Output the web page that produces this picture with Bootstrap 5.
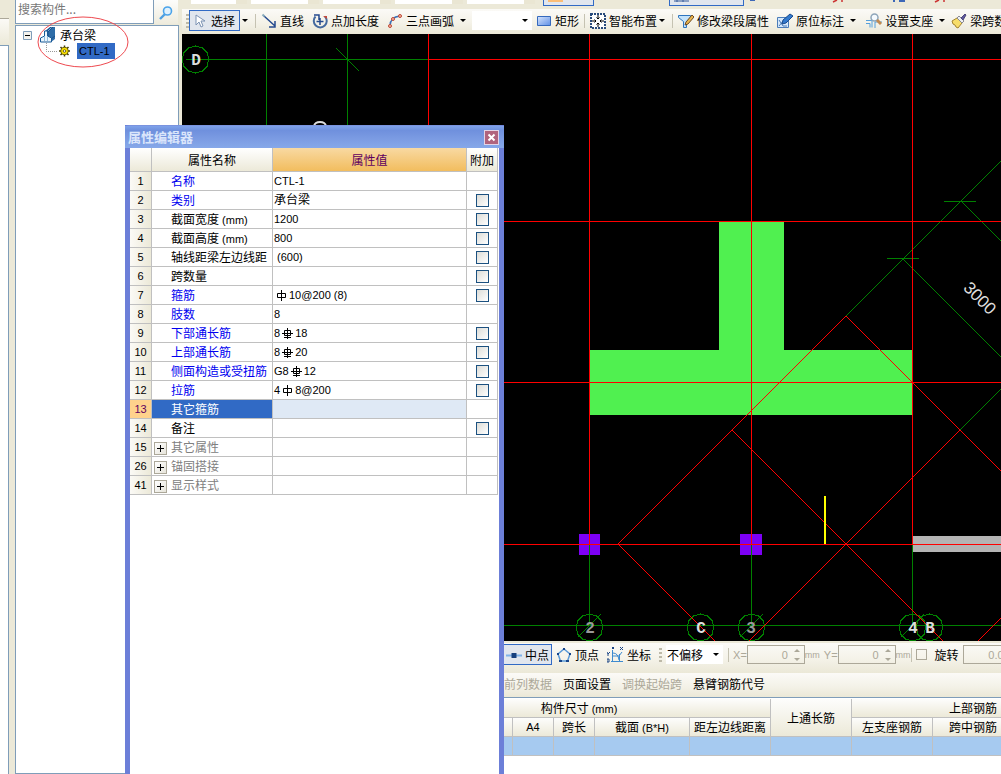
<!DOCTYPE html>
<html lang="zh-CN">
<head>
<meta charset="utf-8">
<meta name="viewport" content="width=device-width, initial-scale=1">
<title>属性编辑器</title>
<link href="https://cdn.jsdelivr.net/npm/bootstrap@5.3.0/dist/css/bootstrap.min.css" rel="stylesheet">
<style>
body{font:12px/16px "Noto Sans CJK SC",sans-serif;color:#000;background:#ece9d8;height:100vh;white-space:nowrap}
button,input,select{font:inherit;color:inherit;border:0;border-radius:0;padding:0;background:none}
.lt{font-family:"Liberation Sans",sans-serif;font-size:11px}
.unit{font-family:"Liberation Sans",sans-serif;font-size:9px}
/* left docks */
.side-strip{width:11px;background:#ece9d8}
.side-tab{height:27px;margin-top:18px;background:linear-gradient(#fbfaf6,#ece9d8);border-top:1px solid #aca899;width:9px}
.side-page{width:9px;background:#fff;border:solid #7f9db9;border-width:1px 1px 0 0}
.tree-dock{width:164px;margin:0 3px 0 4px}
.find-row{height:24px}
.find-row input{width:139px;background:#fff;border:1px solid #7f9db9;border-top:0;font-size:12px;padding:0 2px 5px}
.find-row input::placeholder{color:#777;opacity:1}
.find-row button{width:24px;background:linear-gradient(#fdfdfb,#eeebdd)}
.tree{background:#fff;border:1px solid #7f9db9;padding:1px 0 0 7px;margin-top:1px}
.tree ul{list-style:none;margin:0;padding:0}
.picked{background:#316ac5;padding:0 5px 0 2px;height:16px;margin-left:7px}
.ring{position:absolute;left:20px;top:-11px;pointer-events:none}
/* toolbars */
.bar{background:linear-gradient(#fbfaf7,#f4f2e8 55%,#ebe8d7)}
.upper-bar{height:9px;padding-left:9px;gap:4px;background:#ece9d8}
.cut-combo{width:68px;height:4px;background:#fff;border-right:11px solid #eae6d3}
.cut-btn{height:6px;border:1px solid #316ac5;border-top:0;background:#e1e6ee}
.draw-bar{height:25px;padding:0 0 2px 4px}
.tool{display:flex;align-items:center;gap:3px;height:21px;flex:none}
.tool svg{flex:none}
.tool.active{border:1px solid #316ac5;background:#e1e6ee}
.grip{width:3px;height:14px;flex:none;background:repeating-linear-gradient(#bdb9a8 0 2px,transparent 2px 4px)}
.split{width:10px;height:20px;flex:none;display:flex;align-items:center;justify-content:center}
.split::before,.combo::after{content:"";border:solid transparent;border-width:3px 3px 0;border-top-color:#000}
.rule{width:1px;height:14px;background:#c5c2b2;flex:none;margin:0 5px}
.combo{display:flex;align-items:center;background:#fff;height:19px;padding-right:4px;flex:none}
.combo select{appearance:none;width:47px;height:19px;outline:0;padding-left:1px}
.cad{background:#000;min-height:0}
.cad svg{position:absolute;inset:0}
/* snap bar */
.snap-bar{height:32px;padding:1px 0 8px 321px;border-top:2px solid #ece9d8}
.snap-bar .active{padding:0 2px}
.off{color:#aca899}
.num{display:flex;align-items:center;width:58px;height:19px;border:1px solid #aca899;flex:none}
.num input{width:40px;text-align:right;color:#aca899}
.spin{display:flex;flex-direction:column;gap:6px;margin-left:6px}
.spin i{border:3px solid transparent}
.spin i:first-child{border-top:0;border-bottom-color:#aca899}
.spin i:last-child{border-bottom:0;border-top-color:#aca899}
.snap-bar input[type=checkbox]{appearance:none;width:11px;height:11px;border:1px solid #aca899;flex:none}
.span-bar{height:25px;padding:0 0 2px 322px;gap:11px;border-bottom:1px solid #7f9db9}
.span-area{height:76px;background:#fff;padding-top:1px}
.span-table{table-layout:fixed;width:913px;border-collapse:separate;border-spacing:0}
.span-table th{font-weight:400;text-align:center;height:19px;padding:0;line-height:16px;border:solid #c0c0c0;border-width:0 1px 1px 0;background:linear-gradient(#fdfdfc,#ece9d8)}
.span-table td{height:19px;padding:0;background:#a6caf0;border:solid #c0c0c0;border-width:0 1px 1px 0}
/* property window */
.prop-win{position:absolute;left:125px;top:125px;bottom:0;width:379px;background:#fff;border:solid #6878d4;border-width:1px 5px 0;border-color:#7a93df #6c7fd8 #6c7fd8}
.prop-title{height:22px;margin:0 -5px;padding:0 6px 0 3px;background:linear-gradient(#7ea2ea,#6f90dd 20%,#7c9ce3 60%,#86a8e9);color:#dbe6fb;font-weight:700;font-size:13px}
.prop-title button{width:13px;height:13px;background:#b0637d;outline:1px solid #e3d4e6;display:flex}
.prop-table{table-layout:fixed;width:368px;border-collapse:separate;border-spacing:0;line-height:16px}
.prop-table th,.prop-table td{padding:0 0 0 1px;height:19px;font-weight:400;border:solid #c0c0c0;border-width:0 1px 1px 0;overflow:hidden}
.prop-table thead th{height:24px;text-align:center;background:linear-gradient(#fff,#ece9d8);padding:0}
.prop-table thead .hot{background:linear-gradient(#f8d9a2,#f2bd5e);color:#600060}
.prop-table tbody th{background:linear-gradient(90deg,#fbfaf6,#ece9d8);text-align:center;padding:0}
.prop-table td:nth-child(2){padding-left:19px}
.prop-table td:nth-child(4){padding:0;text-align:center}
.prop-table td:nth-child(3){font:11px/16px "Liberation Sans","Noto Sans CJK SC",sans-serif}
.prop-table td.cjk{font-size:12px}
.prop-table td.inset{padding-left:4px}
.prop-table .key{color:#0000f0}
.prop-table .fold{color:#808080;padding-left:2px!important}
.steel{margin:0 2px;vertical-align:-2px}
.fold button{width:13px;height:13px;border:1px solid #aca899;background:linear-gradient(135deg,#fff,#e6e4da);margin-right:4px;display:inline-flex;vertical-align:-2px}
.now th{background:#ffd28c!important;color:#600060}
.now td:nth-child(2){background:#316ac5;color:#fff}
.now td:nth-child(3){background:#dfe9f5}
.prop-table input{appearance:none;width:13px;height:13px;border:1px solid #1c5180;background:linear-gradient(135deg,#dcdcd7,#fff);display:block;margin:0 auto}
</style>
</head>
<body class="d-flex overflow-hidden position-relative">
<svg width="0" height="0" class="position-absolute" aria-hidden="true">
  <symbol id="barPlain" viewBox="0 0 11 11"><path d="M5.500 0v11M1.500 3.500h8v4h-8z" fill="none" stroke="#000"/></symbol>
  <symbol id="barRibbed" viewBox="0 0 11 11"><path d="M5.500 0v11M2.500 2.500h6v5h-6zM0 5.500h11M2 9.500h7" fill="none" stroke="#000"/></symbol>
</svg>
<aside class="side-strip d-flex flex-column flex-shrink-0"><div class="side-tab flex-shrink-0"></div><div class="side-page flex-grow-1"></div></aside>

<aside class="tree-dock d-flex flex-column flex-shrink-0">
  <div class="find-row d-flex">
    <input type="text" placeholder="搜索构件..." aria-label="搜索构件">
    <button type="button" aria-label="搜索"><svg width="14" height="14" viewBox="0 0 14 14"><path d="M1 13l5-5" stroke="#4e9fe0" stroke-width="2.4"/><circle cx="8.500" cy="5" r="4" fill="#dff1fd" stroke="#4aa3ea" stroke-width="1.600"/></svg></button>
  </div>
  <div class="tree flex-grow-1 position-relative">
    <svg class="ring" width="94" height="54"><ellipse cx="47" cy="27" rx="45" ry="25" fill="none" stroke="#ee4a50"/></svg>
    <ul>
      <li>
        <div class="d-flex align-items-center">
          <svg width="9" height="9" class="flex-shrink-0"><path d="M.5.5h8v8h-8z" fill="#f4f3ee" stroke="#7f9db9"/><path d="M2 4.500h5" stroke="#000"/></svg>
          <svg width="16" height="16" viewBox="0 0 16 16" class="ms-2"><path d="M5 4l5-4h5v12l-4 3-2-3z" fill="#2e6da8"/><path d="M7 4l4-4h2L8 5v6M11 12l4-3" fill="#75a9d4" stroke="#1c4f88"/><path d="M.5 15v-4l4-2V4h3v5l4 2v4z" fill="#eaf4fc" stroke="#1a5a96"/><path d="M4.500 9v5M7.500 9v5" stroke="#8db8dc"/></svg>
          <span class="ms-1">承台梁</span>
        </div>
        <ul>
          <li class="d-flex align-items-center">
            <svg width="47" height="16"><path d="M23.500 0v8.500H34" fill="none" stroke="#999" stroke-dasharray="1 1"/><g transform="translate(41.500 8)"><path d="M0-5.500v11M-5.500 0h11M-4-4l8 8M4-4l-8 8" stroke="#443c00" stroke-width="1.500"/><circle r="3.800" fill="#ffe500" stroke="#4c4400" stroke-width=".8"/><circle r="1.300" fill="#fff" stroke="#4c4400" stroke-width=".8"/></g></svg>
            <span class="picked lt">CTL-1</span>
          </li>
        </ul>
      </li>
    </ul>
  </div>
</aside>

<main class="d-flex flex-column flex-grow-1 overflow-hidden">
  <div class="upper-bar d-flex overflow-hidden flex-shrink-0">
    <i class="cut-combo flex-shrink-0" style="width:56px"></i><i class="cut-combo flex-shrink-0"></i><i class="cut-combo flex-shrink-0"></i><i class="cut-combo flex-shrink-0"></i><i class="cut-combo flex-shrink-0"></i>
    <i class="cut-btn flex-shrink-0 ms-1" style="width:51px"><svg class="d-block ms-1" width="15" height="2"><path d="M0 0h15v2H0z" fill="#fbbd76"/></svg></i>
    <i class="cut-btn flex-shrink-0" style="width:75px;margin-left:71px"><svg class="d-block ms-1" width="15" height="2"><path d="M0 1h15M3 0v2M9 0v2" stroke="#345a9a"/></svg></i>
    <svg width="230" height="4" class="flex-shrink-0"><path d="M2 0h5M146 0v2M151 1h6" stroke="#3d68b8" stroke-width="2"/><path d="M85 2l4-2M94 0v2M187 2l4-2M196 0v2" stroke="#c33" stroke-width="1.500"/></svg>
  </div>
  <div class="bar draw-bar d-flex align-items-center flex-shrink-0">
    <span class="grip"></span>
    <button class="tool active ps-1 pe-1" type="button"><svg width="14" height="16" viewBox="0 0 14 16"><path d="M2 2v10l3-3 2 5 2-1-2-5h4z" fill="#fff" stroke="#7d93b4"/></svg>选择</button>
    <button class="split" type="button" aria-label="更多选择"></button><span class="rule"></span>
    <button class="tool" type="button"><svg width="16" height="16"><path d="M3 3l11 10M14 8v6H8" fill="none" stroke="#244a8e" stroke-width="1.500"/><path d="M1.500 1.500l2 2" stroke="#8ab" stroke-width="2"/></svg>直线</button>
    <button class="tool ms-2" type="button"><svg width="16" height="16"><path d="M3.500 3.500a6.500 6.500 0 1 0 9.500 0" fill="none" stroke="#456a9f" stroke-width="2"/><path d="M2 2h5v5M8 5v7M4.500 8.500h7" fill="none" stroke="#244a8e" stroke-width="1.500"/><path d="M11 3h4v3z" fill="#c24a3d"/></svg>点加长度</button>
    <button class="tool ms-2" type="button"><svg width="16" height="16"><path d="M3 13Q3 4 13 3" fill="none" stroke="#3c72b8" stroke-width="1.500"/><g fill="#f5b6a6" stroke="#bf4a35"><circle cx="3" cy="13" r="1.500"/><circle cx="6" cy="6" r="1.500"/><circle cx="13" cy="3" r="1.500"/></g></svg>三点画弧</button>
    <button class="split ms-1 me-1" type="button" aria-label="更多画弧"></button>
    <label class="combo"><select aria-label="画法" class="w-auto"><option>　　　　</option></select></label>
    <button class="tool ms-1" type="button"><svg width="16" height="16"><defs><linearGradient id="rectFill" x2="1" y2="1"><stop stop-color="#d7e5fc"/><stop offset="1" stop-color="#5f8fe6"/></linearGradient></defs><path d="M1.500 3.500h13v9h-13z" fill="url(#rectFill)" stroke="#3569bd"/></svg>矩形</button>
    <span class="rule"></span>
    <button class="tool" type="button"><svg width="16" height="16"><path d="M1 1h14v14H1z" fill="#fff" stroke="#294b7c" stroke-width="2" stroke-dasharray="2 1"/><path d="M8 2v4M8 10v4M2 8h4M10 8h4M6.500 4.500L8 6l1.500-1.500M6.500 11.500L8 10l1.500 1.500M4.500 6.500L6 8l-1.500 1.500M11.500 6.500L10 8l1.500 1.500" fill="none" stroke="#000"/></svg>智能布置</button>
    <button class="split" type="button" aria-label="更多布置"></button><span class="rule"></span>
    <button class="tool" type="button"><svg width="16" height="16"><path d="M.5 2.500h12v2l-4 4v6h-3v-6l-5-4z" fill="#c3e2fb" stroke="#2d74be"/><path d="M7 12l1-3 6-7 2 2-6 7z" fill="#eab54e" stroke="#6e4b24"/></svg>修改梁段属性</button>
    <button class="tool ms-2" type="button"><svg width="16" height="16"><path d="M.5 4.500h11v10H.5z" fill="#d4e7fb" stroke="#4b7cb9"/><path d="M2 13l5-6M2 7l4 6h4" fill="none" stroke="#4b7cb9"/><path d="M5 11l1-4 7-6 3 2-7 7z" fill="#3379cd" stroke="#1b4b8c"/></svg>原位标注</button>
    <button class="split ms-1" type="button" aria-label="更多标注"></button>
    <button class="tool ms-2" type="button"><svg width="16" height="16"><path d="M0 7.500h6v7M0 10.500h4v4M9 15V9h7" fill="none" stroke="#55a0dc"/><circle cx="8.500" cy="4.500" r="3.500" fill="#f5fafe" stroke="#8fa6ba" stroke-width="1.500"/><path d="M11 7l4 4" stroke="#c28a50" stroke-width="3"/></svg>设置支座</button>
    <button class="split ms-1" type="button" aria-label="更多支座"></button>
    <button class="tool ms-1" type="button"><svg width="16" height="16"><path d="M1 8l5-3 5 5-4 5-2-1-1-2-2-1z" fill="#f7dd6a" stroke="#a38330"/><path d="M6 5l2-2 5 5-2 2z" fill="#eef0f3" stroke="#8b8b94"/><path d="M10 5l4-4 1 1-3 5z" fill="#605a9b" stroke="#4c467e"/></svg>梁跨数</button>
  </div>

  <div class="cad flex-grow-1 position-relative overflow-hidden">
    <svg width="100%" height="100%" role="img" aria-label="轴网平面图">
      <g transform="translate(-182 -34)">
        <path d="M590 350h129V222h65v128h128v65H590z" fill="#50f050"/>
        <path d="M913 536h1200v16H913z" fill="#b4b4b4"/>
        <path d="M579 534h21v21h-21zM740 534h22v21h-22z" fill="#7d00f5"/>
        <g fill="none" stroke="#008000" shape-rendering="crispEdges">
          <path d="M186 59.500h242M266.500 34v400M347.500 34v400M336 48l23 23M944 201.500h32M887 258.500h32M182 625.500h2000M589.500 544v81M751.500 544v81M912.500 544v81"/>
          <path d="M846 316L1146 16M903 259l400 400M961 201l400 400M960 430l400-400"/>
          <path id="bubble" d="M195.500 46l7 2 5 5 1 6-1 7-5 5-7 2-7-2-5-5-1-7 1-6 5-5z"/>
          <use href="#bubble" x="394" y="568"/><use href="#bubble" x="505" y="568"/><use href="#bubble" x="556" y="568"/><use href="#bubble" x="717" y="568"/><use href="#bubble" x="734" y="568"/>
          <path d="M578 637l23-23M740 637l23-23M901 637l23-23"/>
        </g>
        <g fill="none" stroke="#f00" shape-rendering="crispEdges">
          <path d="M428 59.500h1700M428 221.500h1700M428 382.500h1700M428 544.500h1700M428.500 34v400M589.500 34v510M751.500 34v510M912.500 34v510"/>
          <path d="M846 316L618 544l97 97M846 316l325 325M732 430l211 211M960 430L749 641M978 641l300-300"/>
        </g>
        <path d="M825 496v48" stroke="#ff0" stroke-width="2"/>
        <path d="M314 126q1-4 6-4t6 4" fill="none" stroke="#ddd" stroke-width="2"/>
        <g fill="#ddd" font-family="Liberation Mono,monospace" font-size="16" font-weight="700" text-anchor="middle">
          <text x="196" y="65">D</text><text x="590" y="633" fill="#999">2</text><text x="701" y="633">C</text><text x="751" y="633" fill="#999">3</text><text x="913" y="633">4</text><text x="930" y="633">B</text>
          <text transform="translate(980 298) rotate(45)" y="6" font-family="Liberation Sans,sans-serif" font-size="17" font-weight="400">3000</text>
        </g>
      </g>
    </svg>
  </div>

  <div class="bar snap-bar d-flex align-items-center flex-shrink-0">
    <button class="tool active" type="button"><svg width="16" height="16"><path d="M0 8.500h16" stroke="#7fb2e8" stroke-width="2"/><path d="M5.500 6h5v5h-5z" fill="#16407e"/></svg>中点</button>
    <button class="tool ms-1" type="button"><svg width="16" height="16"><path d="M8 2l6 5-2.500 7h-7L2 7z" fill="none" stroke="#5a9ad8" stroke-width="1.500"/><path d="M7 1h2v2H7zM1 6h2v2H1zM13 6h2v2h-2zM3 13h3v2H3zM10 13h3v2h-3z" fill="#17458a"/></svg>顶点</button>
    <button class="tool ms-2" type="button"><svg width="17" height="16"><path d="M5.500 3v12M4 14.500h12M6 6q5 0 6 7M12.500 7v7M15 5l-3 4H6" fill="none" stroke="#3d8bd0"/><path d="M5 0l2 2M7 0L5 2M13 0l3 3M16 0l-3 3M0 5l1 2 2-2M1 7v2M0 12h2v3H0z" fill="none" stroke="#1c4686"/></svg>坐标</button>
    <span class="grip ms-2 me-1"></span>
    <label class="combo"><select aria-label="偏移方式"><option>不偏移</option></select></label>
    <span class="rule me-1"></span>
    <label class="lt off" for="offX">X=</label><span class="num"><input id="offX" class="lt" value="0" disabled><span class="spin"><i></i><i></i></span></span><span class="unit off">mm</span>
    <label class="lt off ms-1" for="offY">Y=</label><span class="num"><input id="offY" class="lt" value="0" disabled><span class="spin"><i></i><i></i></span></span><span class="unit off">mm</span>
    <span class="rule ms-0 me-1"></span>
    <input type="checkbox" id="turn"><label for="turn" class="ms-2 me-1">旋转</label>
    <span class="num"><input class="lt" value="0.0" aria-label="旋转角度" disabled><span class="spin"><i></i><i></i></span></span>
  </div>
  <div class="bar span-bar d-flex align-items-center flex-shrink-0">
    <button type="button" class="off">前列数据</button><button type="button">页面设置</button><button type="button" class="off">调换起始跨</button><button type="button">悬臂钢筋代号</button>
  </div>
  <div class="span-area overflow-hidden flex-shrink-0">
    <table class="span-table">
      <colgroup><col style="width:206px"><col style="width:125px"><col style="width:41px"><col style="width:41px"><col style="width:95px"><col style="width:81px"><col style="width:81px"><col style="width:81px"><col style="width:81px"><col style="width:81px"></colgroup>
      <thead>
        <tr><th rowspan="2"></th><th colspan="5">构件尺寸<span class="lt"> (mm)</span></th><th rowspan="2">上通长筋</th><th colspan="3">上部钢筋</th></tr>
        <tr><th></th><th class="lt">A4</th><th>跨长</th><th>截面<span class="lt"> (B*H)</span></th><th>距左边线距离</th><th>左支座钢筋</th><th>跨中钢筋</th><th></th></tr>
      </thead>
      <tbody><tr><td></td><td></td><td></td><td></td><td></td><td></td><td></td><td></td><td></td><td></td></tr></tbody>
    </table>
  </div>
</main>

<section class="prop-win" aria-label="属性编辑器">
  <div class="prop-title d-flex align-items-center justify-content-between">属性编辑器<button type="button" aria-label="关闭"><svg width="13" height="13"><path d="M3.500 3.500l6 6M9.500 3.500l-6 6" stroke="#fff" stroke-width="2"/></svg></button></div>
  <table class="prop-table">
    <colgroup><col style="width:22px"><col style="width:121px"><col style="width:194px"><col style="width:31px"></colgroup>
    <thead><tr><th></th><th>属性名称</th><th class="hot">属性值</th><th>附加</th></tr></thead>
    <tbody>
      <tr><th class="lt">1</th><td class="key">名称</td><td>CTL-1</td><td></td></tr>
      <tr><th class="lt">2</th><td class="key">类别</td><td class="cjk">承台梁</td><td><input type="checkbox" aria-label="附加 类别"></td></tr>
      <tr><th class="lt">3</th><td>截面宽度<span class="lt"> (mm)</span></td><td>1200</td><td><input type="checkbox" aria-label="附加 截面宽度"></td></tr>
      <tr><th class="lt">4</th><td>截面高度<span class="lt"> (mm)</span></td><td>800</td><td><input type="checkbox" aria-label="附加 截面高度"></td></tr>
      <tr><th class="lt">5</th><td>轴线距梁左边线距</td><td class="inset">(600)</td><td><input type="checkbox" aria-label="附加 轴线距"></td></tr>
      <tr><th class="lt">6</th><td>跨数量</td><td></td><td><input type="checkbox" aria-label="附加 跨数量"></td></tr>
      <tr><th class="lt">7</th><td class="key">箍筋</td><td><svg class="steel" width="11" height="11"><use href="#barPlain"/></svg>10@200 (8)</td><td><input type="checkbox" aria-label="附加 箍筋"></td></tr>
      <tr><th class="lt">8</th><td class="key">肢数</td><td>8</td><td></td></tr>
      <tr><th class="lt">9</th><td class="key">下部通长筋</td><td>8<svg class="steel" width="11" height="11"><use href="#barRibbed"/></svg>18</td><td><input type="checkbox" aria-label="附加 下部通长筋"></td></tr>
      <tr><th class="lt">10</th><td class="key">上部通长筋</td><td>8<svg class="steel" width="11" height="11"><use href="#barRibbed"/></svg>20</td><td><input type="checkbox" aria-label="附加 上部通长筋"></td></tr>
      <tr><th class="lt">11</th><td class="key">侧面构造或受扭筋</td><td>G8<svg class="steel" width="11" height="11"><use href="#barRibbed"/></svg>12</td><td><input type="checkbox" aria-label="附加 侧面筋"></td></tr>
      <tr><th class="lt">12</th><td class="key">拉筋</td><td>4<svg class="steel" width="11" height="11"><use href="#barPlain"/></svg>8@200</td><td><input type="checkbox" aria-label="附加 拉筋"></td></tr>
      <tr class="now"><th class="lt">13</th><td>其它箍筋</td><td></td><td></td></tr>
      <tr><th class="lt">14</th><td>备注</td><td></td><td><input type="checkbox" aria-label="附加 备注"></td></tr>
      <tr><th class="lt">15</th><td class="fold"><button type="button" aria-label="展开"><svg width="11" height="11"><path d="M2 5.500h7M5.500 2v7" stroke="#000"/></svg></button>其它属性</td><td></td><td></td></tr>
      <tr><th class="lt">26</th><td class="fold"><button type="button" aria-label="展开"><svg width="11" height="11"><path d="M2 5.500h7M5.500 2v7" stroke="#000"/></svg></button>锚固搭接</td><td></td><td></td></tr>
      <tr><th class="lt">41</th><td class="fold"><button type="button" aria-label="展开"><svg width="11" height="11"><path d="M2 5.500h7M5.500 2v7" stroke="#000"/></svg></button>显示样式</td><td></td><td></td></tr>
    </tbody>
  </table>
</section>
<script src="https://cdn.jsdelivr.net/npm/bootstrap@5.3.0/dist/js/bootstrap.bundle.min.js"></script>
</body>
</html>
